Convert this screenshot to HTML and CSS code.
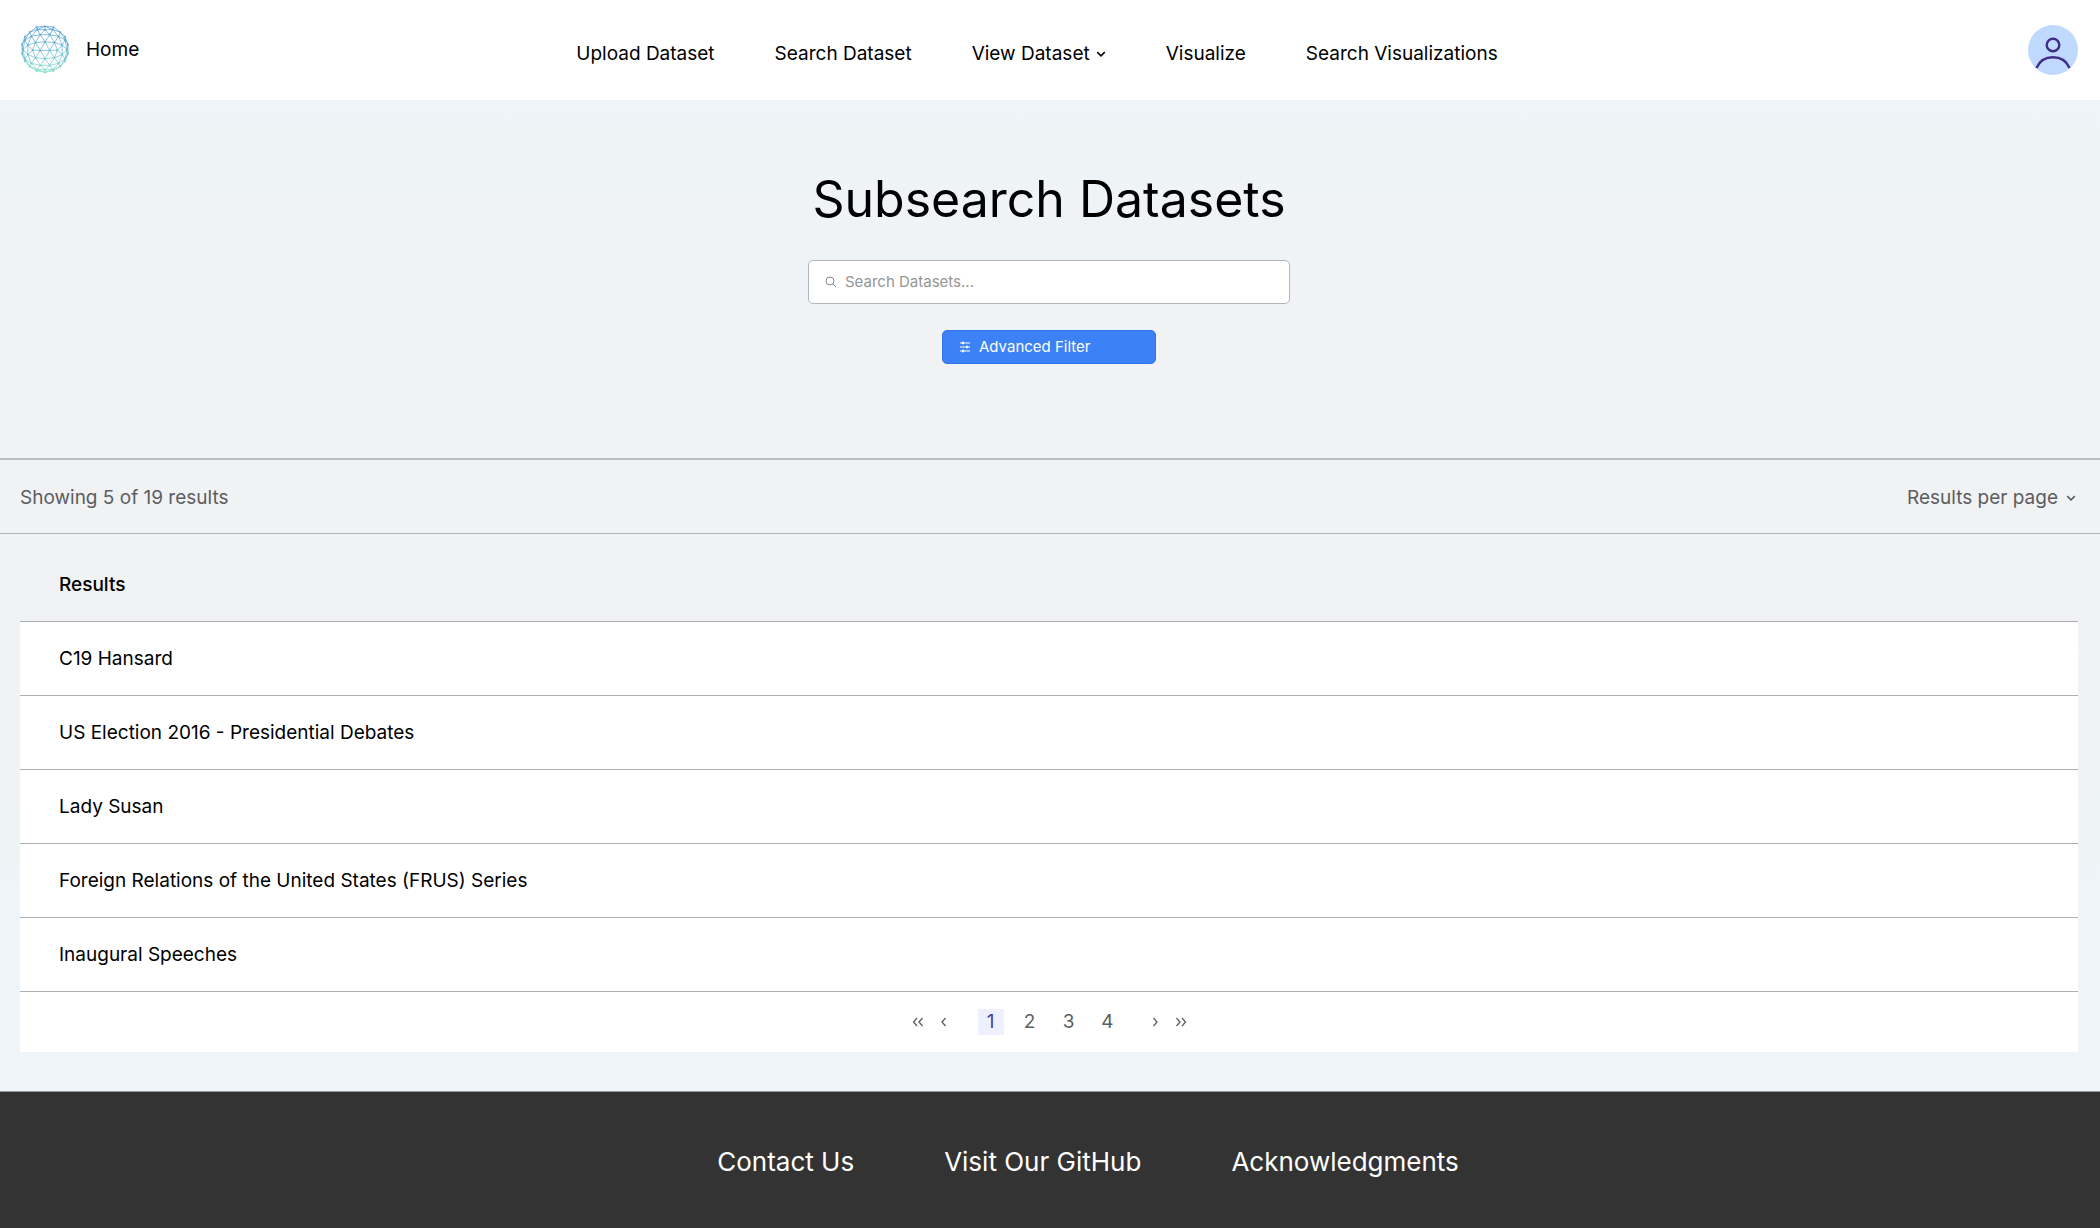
FILE: index.html
```html
<!DOCTYPE html>
<html lang="en">
<head>
<meta charset="utf-8">
<meta name="viewport" content="width=device-width, initial-scale=1">
<title>Subsearch Datasets</title>
<link rel="stylesheet" href="styles.css">
</head>
<body>
<header class="topbar">
  <a class="home" href="#">
    <svg class="logo" viewBox="-25 -24 50 50" aria-hidden="true">
      <defs>
        <linearGradient id="globe" gradientUnits="userSpaceOnUse" x1="0" y1="-24" x2="0" y2="24">
          <stop offset="0" stop-color="#4a97d2"/>
          <stop offset="0.5" stop-color="#5bb0d0"/>
          <stop offset="1" stop-color="#7fdcc4"/>
        </linearGradient>
      </defs>
      <g id="mesh" stroke="url(#globe)"></g>
    </svg>
    <span>Home</span>
  </a>
  <nav class="nav" aria-label="Main">
    <a href="#">Upload Dataset</a>
    <a href="#">Search Dataset</a>
    <a class="has-menu" href="#">View Dataset
      <svg class="chevron" viewBox="0 0 8 8" aria-hidden="true"><path d="M1 2.5 4 5.5 7 2.5"/></svg>
    </a>
    <a href="#">Visualize</a>
    <a href="#">Search Visualizations</a>
  </nav>
  <button class="avatar" type="button" aria-label="Account">
    <svg viewBox="0 0 50 50" aria-hidden="true">
      <circle cx="25" cy="20" r="6.3"/>
      <path d="M8.500 43C11.500 36 18 32.300 25 32.300S38.500 36 41.500 43"/>
    </svg>
  </button>
</header>

<main class="page">
  <section class="hero">
    <h1>Subsearch Datasets</h1>
    <form class="search">
      <label class="field">
        <svg viewBox="0 0 12 12" aria-hidden="true"><circle cx="5" cy="5" r="4"/><path d="M8 8l3 3"/></svg>
        <input type="search" placeholder="Search Datasets..." aria-label="Search Datasets">
      </label>
      <button class="filter" type="button">
        <svg viewBox="0 0 12 12" aria-hidden="true">
          <path d="M1 2h10M1 6h10M1 10h10"/>
          <path class="knobs" d="M4 .7v2.600M8 4.700v2.600M4 8.700v2.600"/>
        </svg>
        Advanced Filter
      </button>
    </form>
  </section>

  <section class="summary">
    <p>Showing 5 of 19 results</p>
    <button class="per-page" type="button">Results per page
      <svg class="chevron" viewBox="0 0 8 8" aria-hidden="true"><path d="M1 2.500 4 5.500 7 2.500"/></svg>
    </button>
  </section>

  <section class="results">
    <table>
      <thead><tr><th scope="col">Results</th></tr></thead>
      <tbody>
        <tr><td>C19 Hansard</td></tr>
        <tr><td>US Election 2016 - Presidential Debates</td></tr>
        <tr><td>Lady Susan</td></tr>
        <tr><td>Foreign Relations of the United States (FRUS) Series</td></tr>
        <tr><td>Inaugural Speeches</td></tr>
      </tbody>
    </table>
    <nav class="pager" aria-label="Pages">
      <button type="button" aria-label="First page"><svg viewBox="0 0 12 10" aria-hidden="true"><path d="M5 1 1.500 5 5 9M10.500 1 7 5l3.500 4"/></svg></button>
      <button type="button" aria-label="Previous page"><svg viewBox="0 0 12 10" aria-hidden="true"><path d="M7.500 1 4 5l3.500 4"/></svg></button>
      <ol>
        <li><button class="current" type="button" aria-current="page">1</button></li>
        <li><button type="button">2</button></li>
        <li><button type="button">3</button></li>
        <li><button type="button">4</button></li>
      </ol>
      <button type="button" aria-label="Next page"><svg viewBox="0 0 12 10" aria-hidden="true"><path d="M4.500 1 8 5 4.500 9"/></svg></button>
      <button type="button" aria-label="Last page"><svg viewBox="0 0 12 10" aria-hidden="true"><path d="M1.500 1 5 5 1.500 9M7 1l3.500 4L7 9"/></svg></button>
    </nav>
  </section>
</main>

<footer class="footer">
  <a href="#">Contact Us</a>
  <a href="#">Visit Our GitHub</a>
  <a href="#">Acknowledgments</a>
</footer>
<script src="globe.js"></script>
</body>
</html>
```
FILE: styles.css
```css
* { box-sizing: border-box; }

body {
  margin: 0;
  min-height: 100vh;
  display: flex;
  flex-direction: column;
  font-family: Inter, "Liberation Sans", sans-serif;
  font-size: 19px;
  line-height: 24px;
  color: #000;
  background: #fff;
}

a { color: inherit; text-decoration: none; }

button {
  font: inherit;
  color: inherit;
  border: 0;
  padding: 0;
  background: none;
  cursor: pointer;
}

svg { display: block; fill: none; stroke: currentColor; }

.topbar {
  height: 100px;
  padding: 0 22px 0 20px;
  display: grid;
  grid-template-columns: 1fr auto 1fr;
  align-items: center;
}

.home { display: flex; align-items: center; gap: 16px; }
.logo { width: 50px; height: 50px; }

.nav { display: flex; gap: 60px; padding: 8px 24px 0 0; }
.has-menu { display: flex; align-items: center; gap: 6px; }
.chevron { width: 10px; height: 10px; stroke-width: 1.2; }

.avatar {
  justify-self: end;
  width: 50px;
  height: 50px;
  border-radius: 50%;
  background: #bfd9ff;
  color: #3f2d86;
}
.avatar svg { stroke-width: 2.4; }

.page {
  flex: 1;
  background: linear-gradient(#eef4f7, #f1f2f4 30%, #f1f2f4 50%, #eef4f7 80%);
}

.hero {
  display: flex;
  flex-direction: column;
  align-items: center;
  padding: 67px 22px 94px 20px;
}
h1 { margin: 0; font-size: 50px; line-height: 64px; font-weight: 400; }

.search {
  width: 100%;
  margin-top: 29px;
  display: flex;
  flex-direction: column;
  align-items: center;
  gap: 26px;
  font-size: 15px;
}
.field {
  width: 100%;
  max-width: 482px;
  height: 44px;
  padding: 0 16px;
  display: flex;
  align-items: center;
  gap: 8px;
  border: 1px solid #b4b5ba;
  border-radius: 5px;
  background: #fff;
  color: #8a8a8a;
}
.field svg, .filter svg { width: 12px; height: 12px; }
.field input {
  flex: 1;
  min-width: 0;
  padding: 0;
  border: 0;
  outline: 0;
  font: inherit;
  color: #000;
  background: none;
}
.field input::placeholder { color: #959595; opacity: 1; }

.filter {
  width: 214px;
  height: 34px;
  padding: 0 16px;
  display: flex;
  align-items: center;
  gap: 8px;
  border: 1px solid #2f74ea;
  border-radius: 5px;
  background: #3c82f6;
  color: #fff;
}
.knobs { stroke-width: 2; }

.summary {
  height: 76px;
  padding: 2px 24px 0 20px;
  display: flex;
  align-items: center;
  justify-content: space-between;
  border-top: 2px solid #bcbdc0;
  border-bottom: 1px solid #b0b1b4;
  color: #5c5d60;
}
.summary p { margin: 0; }
.per-page { display: flex; align-items: center; gap: 8px; }

.results { padding: 13px 22px 38px 20px; }
table { width: 100%; border-collapse: collapse; background: #fff; }
th, td {
  height: 74px;
  padding: 2px 39px 0;
  text-align: left;
  border-bottom: 1px solid #adaeb1;
}
thead { background: #f1f2f4; }
th { font-weight: 500; }

.pager {
  height: 60px;
  display: flex;
  align-items: center;
  justify-content: center;
  gap: 14px;
  background: #fff;
  color: #5c5d60;
}
.pager svg { width: 12px; height: 10px; stroke-width: 1.3; }
.pager ol {
  margin: 0;
  padding: 0 14px;
  display: flex;
  gap: 13px;
  list-style: none;
}
.pager li button { width: 26px; height: 26px; }
.pager .current { background: #eef0ff; color: #4a3fa0; }

.footer {
  padding: 51px 0 47px 76px;
  display: flex;
  justify-content: center;
  gap: 90px;
  font-size: 26px;
  line-height: 38px;
  border-top: 1px solid #949b9b;
  background: #333;
  color: #fff;
}
```
FILE: globe.js
```js
// Builds the geodesic globe of the logo: the near half of a subdivided icosahedron.
(function () {
  const t = (1 + Math.sqrt(5)) / 2;
  const base = [[-1,t,0],[1,t,0],[-1,-t,0],[1,-t,0],[0,-1,t],[0,1,t],[0,-1,-t],[0,1,-t],[t,0,-1],[t,0,1],[-t,0,-1],[-t,0,1]];
  const faces = [[0,11,5],[0,5,1],[0,1,7],[0,7,10],[0,10,11],[1,5,9],[5,11,4],[11,10,2],[10,7,6],[7,1,8],[3,9,4],[3,4,2],[3,2,6],[3,6,8],[3,8,9],[4,9,5],[2,4,11],[6,2,10],[8,6,7],[9,8,1]];
  const n = 3, tilt = 1.63, radius = 23.5, horizon = -0.12;
  const points = new Map(), edges = new Map();
  const project = (a, b, c, i, j) => {
    const k = n - i - j;
    const v = [0, 1, 2].map(d => a[d] * i + b[d] * j + c[d] * k);
    const m = Math.hypot(...v);
    const [x, y, z] = v.map(q => q / m);
    const p = [x, y * Math.cos(tilt) - z * Math.sin(tilt), y * Math.sin(tilt) + z * Math.cos(tilt)];
    const key = p.map(q => Math.round(q * 1000)).join();
    points.set(key, p);
    return key;
  };
  const join = (p, q) => edges.set([p, q].sort().join("|"), [p, q]);
  for (const f of faces) {
    const [a, b, c] = f.map(i => base[i]);
    for (let i = 0; i < n; i++) for (let j = 0; j < n - i; j++) {
      const p = project(a, b, c, i, j), q = project(a, b, c, i + 1, j), r = project(a, b, c, i, j + 1);
      join(p, q); join(q, r); join(r, p);
    }
  }
  const at = p => [p[0] * radius, -p[1] * radius].map(v => v.toFixed(1)).join(" ");
  let lines = "", dots = "";
  for (const [p, q] of edges.values()) {
    const a = points.get(p), b = points.get(q);
    if (a[2] > horizon && b[2] > horizon) lines += `M${at(a)}L${at(b)}`;
  }
  for (const p of points.values()) if (p[2] > horizon) dots += `M${at(p)}h.01`;
  document.getElementById("mesh").innerHTML =
    `<path stroke-width=".7" d="${lines}"/><path stroke-width="1.8" stroke-linecap="round" d="${dots}"/>`;
})();
```
